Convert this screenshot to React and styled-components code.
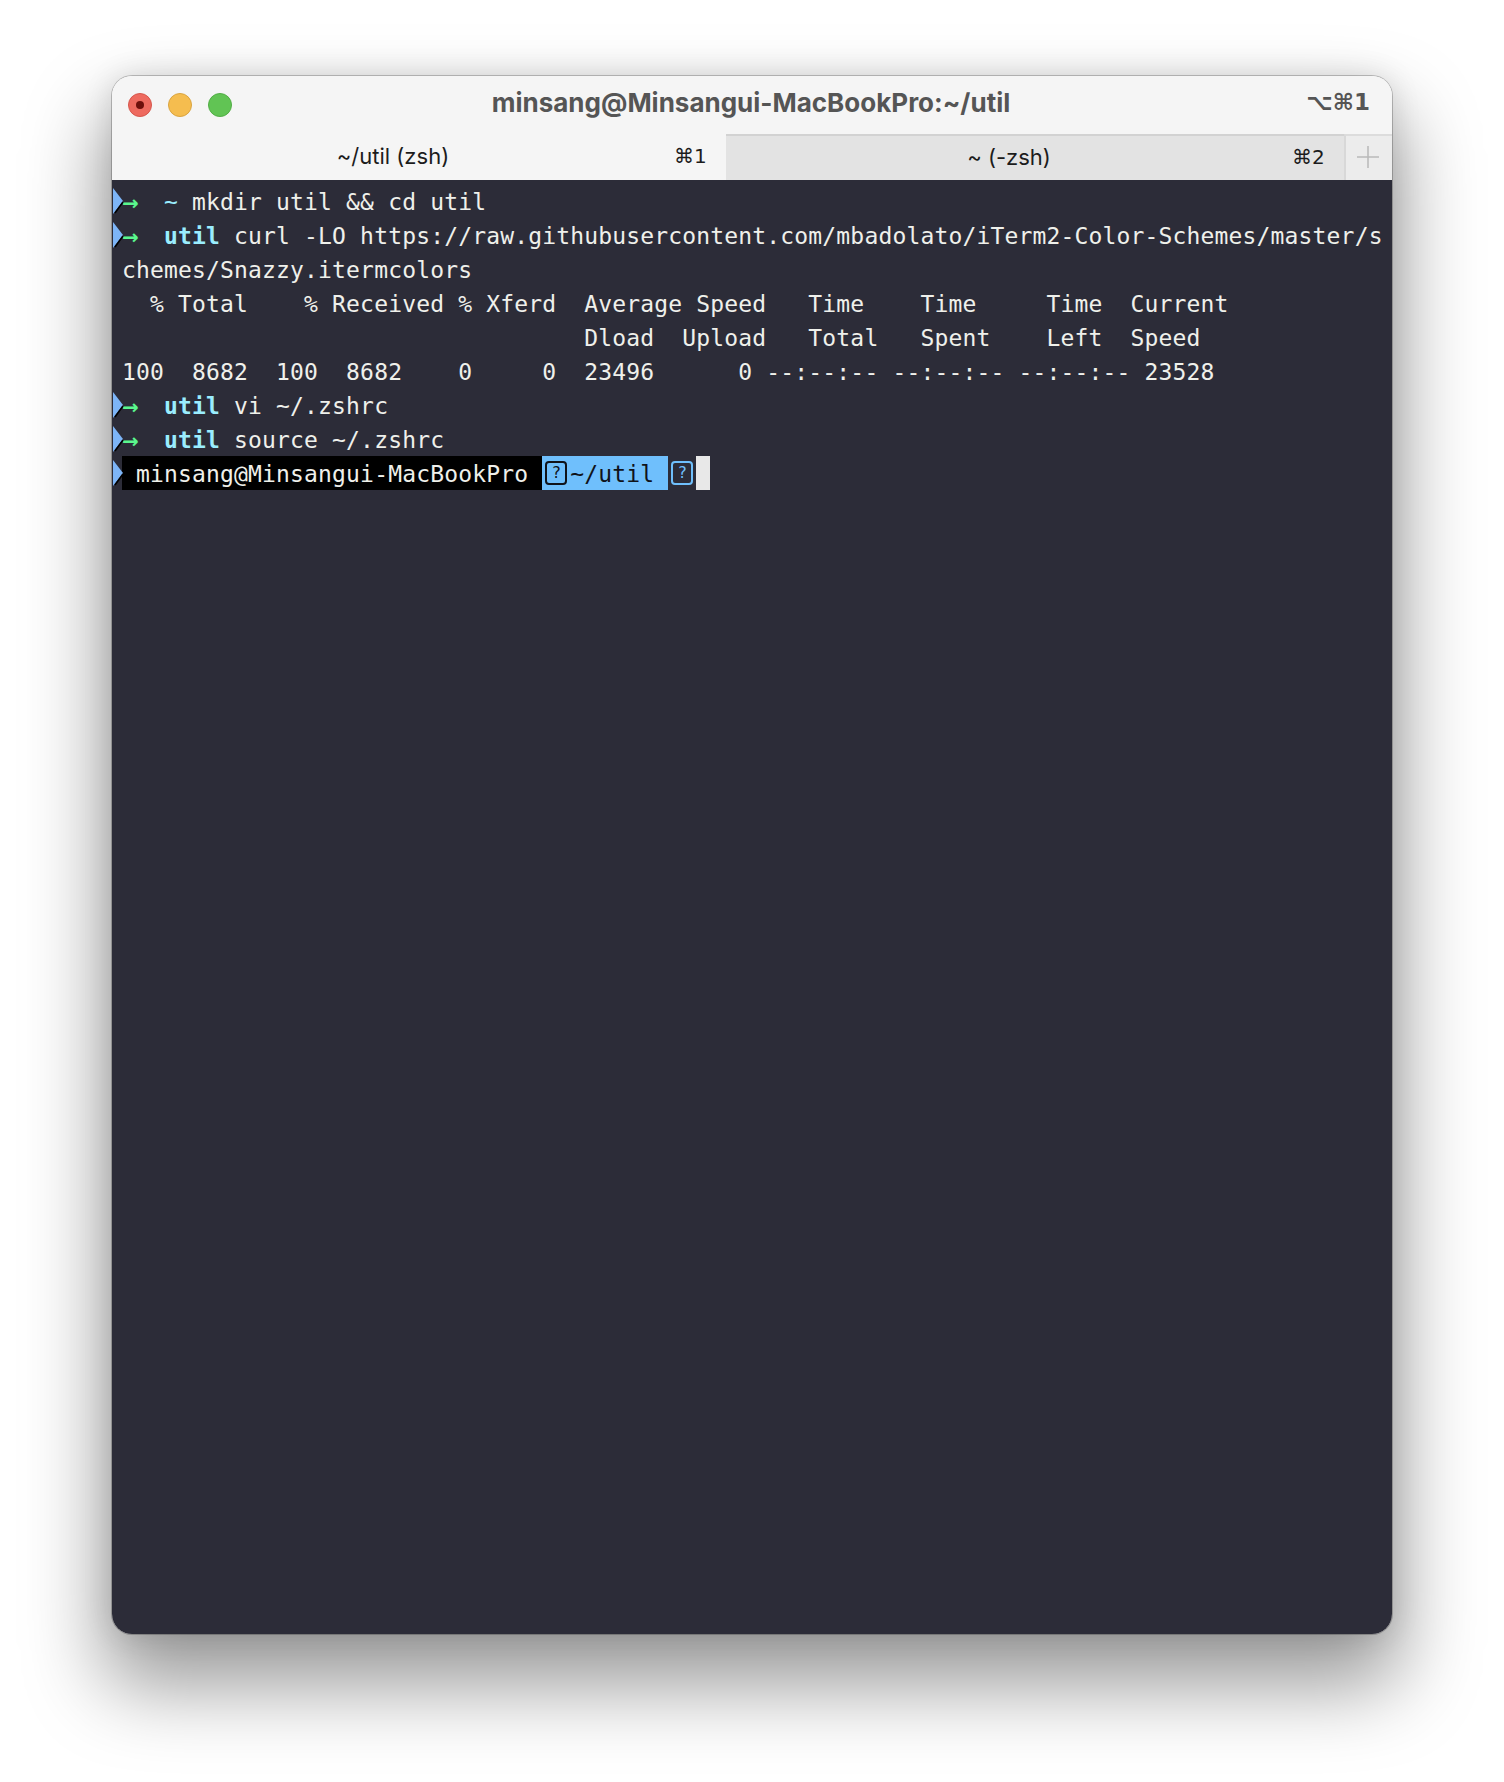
import React from 'react';
import styled, { createGlobalStyle } from 'styled-components';

const GlobalStyle = createGlobalStyle`
  html, body {
    margin: 0;
    background: #fff;
  }
`;

const Page = styled.div`
  width: 1504px;
  height: 1782px;
  padding: 76px 112px 148px;
  box-sizing: border-box;
`;

const Window = styled.div`
  height: 100%;
  display: flex;
  flex-direction: column;
  border-radius: 20px;
  overflow: hidden;
  box-shadow: 0 0 0 1px rgba(0, 0, 0, 0.22), 0 44px 80px 8px rgba(0, 0, 0, 0.4), 0 0 30px rgba(0, 0, 0, 0.12);
`;

const TitleBar = styled.div`
  height: 58px;
  flex: none;
  padding: 0 22px 0 16px;
  display: grid;
  grid-template-columns: 1fr auto 1fr;
  align-items: center;
  background: #f5f5f5;
  font-family: Inter, "Liberation Sans", sans-serif;
`;

const Lights = styled.div`
  display: flex;
  gap: 16px;
`;

const Light = styled.span`
  width: 24px;
  height: 24px;
  box-sizing: border-box;
  border-radius: 50%;
  background: ${(p) => p.$color};
  border: 1px solid ${(p) => p.$edge};
  display: flex;
  align-items: center;
  justify-content: center;
`;

const CloseDot = styled.span`
  width: 8px;
  height: 8px;
  border-radius: 50%;
  background: #6e0f0b;
`;

const Title = styled.div`
  font-size: 26px;
  font-weight: 700;
  color: #555;
  white-space: nowrap;
  margin-top: -5px;
  margin-left: 4px;
`;

const WindowShortcut = styled.div`
  justify-self: end;
  font-family: "DejaVu Sans", sans-serif;
  font-size: 23px;
  font-weight: 700;
  color: #555;
  white-space: nowrap;
  position: relative;
  top: -3px;
`;

const TabBar = styled.div`
  height: 46px;
  flex: none;
  display: flex;
  font-family: Inter, "Liberation Sans", sans-serif;
  font-size: 22px;
  color: #1c1c1c;
`;

const Tab = styled.div`
  flex: ${(p) => p.$width} 0 0;
  display: flex;
  align-items: center;
  padding-bottom: 3px;
  box-sizing: border-box;
  background: ${(p) => (p.$active ? '#f5f5f5' : '#e3e3e3')};
  border-top: ${(p) => (p.$active ? 'none' : '2px solid #d2d2d2')};
`;

const TabLabel = styled.span`
  flex: 1;
  text-align: center;
`;

const TabShortcut = styled.span`
  width: 52px;
  padding-right: 20px;
  box-sizing: border-box;
  text-align: right;
  font-family: "DejaVu Sans", sans-serif;
  font-size: 20px;
  white-space: nowrap;
`;

const AddTab = styled.div`
  width: 48px;
  flex: none;
  display: flex;
  align-items: center;
  justify-content: center;
  padding: 0 2px 3px 0;
  box-sizing: border-box;
  background: #ececec;
  border-left: 2px solid #d8d8d8;
  border-top: 2px solid #dcdcdc;
`;

const Terminal = styled.div`
  flex: 1;
  padding: 4px 0 0 10px;
  background: #2c2c38;
  color: #eff0eb;
  font-family: "DejaVu Sans Mono", monospace;
  font-size: 23px;
  letter-spacing: 0.16px;
`;

const Line = styled.div`
  position: relative;
  height: 34px;
  line-height: 36px;
  white-space: pre;
`;

const Wedge = styled.svg`
  position: absolute;
  left: -10px;
  top: 3px;
`;

const Arrow = styled.span`
  display: inline-block;
  width: 14px;
  color: #5af78e;
  font-family: "DejaVu Sans", sans-serif;
  font-weight: 700;
  font-size: 20px;
  letter-spacing: 0;
`;

const Dir = styled.span`
  color: #9aedfe;
  font-weight: ${(p) => (p.$plain ? 400 : 700)};
`;

const Segment = styled.span`
  display: inline-block;
  height: 34px;
  vertical-align: top;
  background: ${(p) => p.$bg};
  color: ${(p) => p.$color || 'inherit'};
`;

const MissingGlyph = styled.span`
  display: inline-flex;
  align-items: center;
  justify-content: center;
  width: 22px;
  height: 24px;
  margin: 5px 3px 0;
  box-sizing: border-box;
  vertical-align: top;
  border: 2px solid ${(p) => p.$color};
  border-radius: 4px;
  color: ${(p) => p.$color};
  font-size: 16px;
  line-height: 1;
  letter-spacing: 0;
`;

const Cursor = styled.span`
  display: inline-block;
  width: 14px;
  height: 34px;
  vertical-align: top;
  background: #e8e8e8;
`;

const Chevron = () => (
  <Wedge width="12" height="28" viewBox="0 0 12 28">
    <path d="M1 1 L11 14 L1 27 Z" fill="#7db5f7" />
    <path d="M3 26 L11 15" stroke="#000" strokeWidth="1.5" fill="none" />
  </Wedge>
);

const Prompt = ({ dir, plain, children }) => (
  <Line>
    <Chevron />
    <Arrow>→</Arrow>
    {'  '}
    <Dir $plain={plain}>{dir}</Dir>
    {' ' + children}
  </Line>
);

const App = () => (
  <Page>
    <GlobalStyle />
    <Window>
      <TitleBar>
        <Lights>
          <Light $color="#ee6a5f" $edge="#d5574d">
            <CloseDot />
          </Light>
          <Light $color="#f5bd4f" $edge="#d9a441" />
          <Light $color="#61c454" $edge="#52ad46" />
        </Lights>
        <Title>minsang@Minsangui-MacBookPro:~/util</Title>
        <WindowShortcut>⌥⌘1</WindowShortcut>
      </TitleBar>
      <TabBar>
        <Tab $width={614} $active>
          <TabLabel>~/util (zsh)</TabLabel>
          <TabShortcut>⌘1</TabShortcut>
        </Tab>
        <Tab $width={618}>
          <TabLabel>~ (-zsh)</TabLabel>
          <TabShortcut>⌘2</TabShortcut>
        </Tab>
        <AddTab>
          <svg width="22" height="22" viewBox="0 0 22 22">
            <path d="M11 0V22M0 11H22" stroke="#b9b9b9" strokeWidth="1.5" />
          </svg>
        </AddTab>
      </TabBar>
      <Terminal>
        <Prompt dir="~" plain>mkdir util && cd util</Prompt>
        <Prompt dir="util">curl -LO https://raw.githubusercontent.com/mbadolato/iTerm2-Color-Schemes/master/s</Prompt>
        <Line>chemes/Snazzy.itermcolors</Line>
        <Line>{'  % Total    % Received % Xferd  Average Speed   Time    Time     Time  Current'}</Line>
        <Line>{'                                 Dload  Upload   Total   Spent    Left  Speed'}</Line>
        <Line>{'100  8682  100  8682    0     0  23496      0 --:--:-- --:--:-- --:--:-- 23528'}</Line>
        <Prompt dir="util">vi ~/.zshrc</Prompt>
        <Prompt dir="util">source ~/.zshrc</Prompt>
        <Line>
          <Chevron />
          <Segment $bg="#000">{' minsang@Minsangui-MacBookPro '}</Segment>
          <Segment $bg="#6fbffc" $color="#10131a">
            <MissingGlyph $color="#10131a">?</MissingGlyph>
            {'~/util '}
          </Segment>
          <MissingGlyph $color="#6fbffc">?</MissingGlyph>
          <Cursor />
        </Line>
      </Terminal>
    </Window>
  </Page>
);

export default App;
